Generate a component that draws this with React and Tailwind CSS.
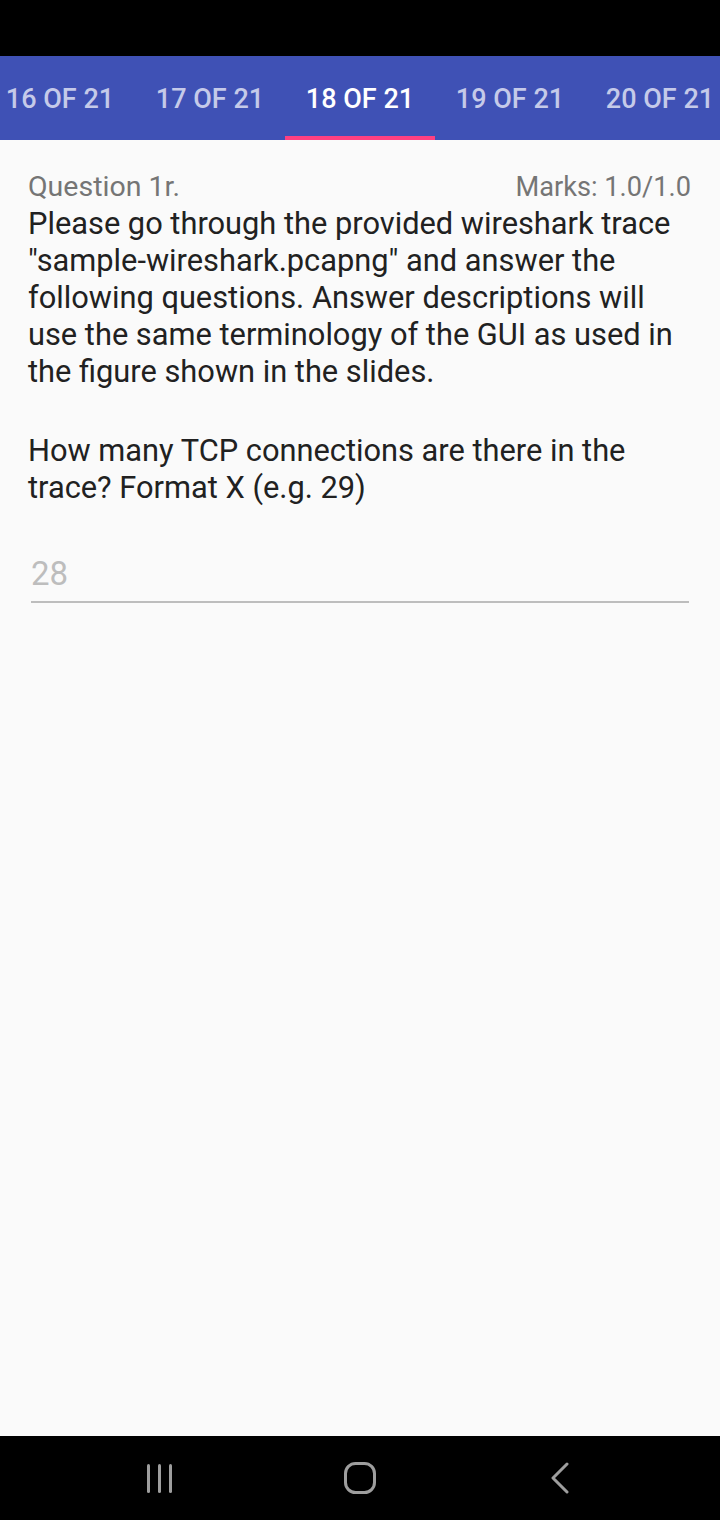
import { useState } from 'react';

const tabs = ['16 OF 21', '17 OF 21', '18 OF 21', '19 OF 21', '20 OF 21'];

export default function App() {
  const [active, setActive] = useState(2);
  const [answer, setAnswer] = useState('');

  return (
    <div className="w-[720px] h-[1520px] flex flex-col bg-[#fafafa]" style={{ fontFamily: 'Roboto, "Liberation Sans", sans-serif' }}>
      {/* status bar */}
      <div className="h-[56px] bg-black shrink-0" />

      {/* tabs */}
      <div className="h-[84px] bg-[#3f51b5] flex shrink-0 overflow-hidden">
        <div className="flex -ml-[15px]">
          {tabs.map((t, i) => (
            <button
              key={t}
              onClick={() => setActive(i)}
              className={`relative w-[150px] h-[84px] flex items-center justify-center text-[27px] font-medium ${i === active ? 'text-white' : 'text-[#c5cae9]'}`}
            >
              <span className="mt-[3px]">{t}</span>
              {i === active && <div className="absolute left-0 right-0 bottom-0 h-[4px] bg-[#ff4081]" />}
            </button>
          ))}
        </div>
      </div>

      {/* content */}
      <div className="flex-1 px-[28px] pt-[31px]">
        <div className="flex justify-between items-center leading-[32px] text-[#757575]">
          <span className="text-[28.5px]">Question 1r.</span>
          <span className="text-[27.2px] mr-[1px]">Marks: 1.0/1.0</span>
        </div>
        <p className="text-[30.8px] leading-[37px] text-[#212121] mt-[2px]">
          Please go through the provided wireshark trace "sample-wireshark.pcapng" and answer the following questions. Answer descriptions will use the same terminology of the GUI as used in the figure shown in the slides.
        </p>
        <p className="text-[30.8px] leading-[37px] text-[#212121] mt-[42px] pr-[20px]">
          How many TCP connections are there in the trace? Format X (e.g. 29)
        </p>
        <div className="mt-[48px] ml-[3px] mr-[3px] border-b-2 border-[#bdbdbd]">
          <input
            value={answer}
            onChange={(e) => setAnswer(e.target.value)}
            placeholder="28"
            className="w-full bg-transparent outline-none text-[33px] leading-[40px] pb-[7px] text-[#212121] placeholder:text-[#bdbdbd]"
          />
        </div>
      </div>

      {/* nav bar */}
      <div className="h-[84px] bg-black shrink-0 flex items-center pl-[60px]">
        <div className="w-[200px] flex justify-center">
          <svg width="28" height="31" viewBox="0 0 28 31">
            <rect x="1" y="1" width="3" height="29" rx="1.5" fill="#9e9e9e" />
            <rect x="12" y="1" width="3" height="29" rx="1.5" fill="#9e9e9e" />
            <rect x="23" y="1" width="3" height="29" rx="1.5" fill="#9e9e9e" />
          </svg>
        </div>
        <div className="w-[200px] flex justify-center">
          <svg width="32" height="32" viewBox="0 0 32 32">
            <rect x="1.5" y="1.5" width="29" height="29" rx="10" fill="none" stroke="#9e9e9e" strokeWidth="3" />
          </svg>
        </div>
        <div className="w-[200px] flex justify-center">
          <svg width="20" height="32" viewBox="0 0 20 32">
            <path d="M17 2 L3 16 L17 30" fill="none" stroke="#9e9e9e" strokeWidth="3" strokeLinecap="round" strokeLinejoin="round" />
          </svg>
        </div>
      </div>
    </div>
  );
}
